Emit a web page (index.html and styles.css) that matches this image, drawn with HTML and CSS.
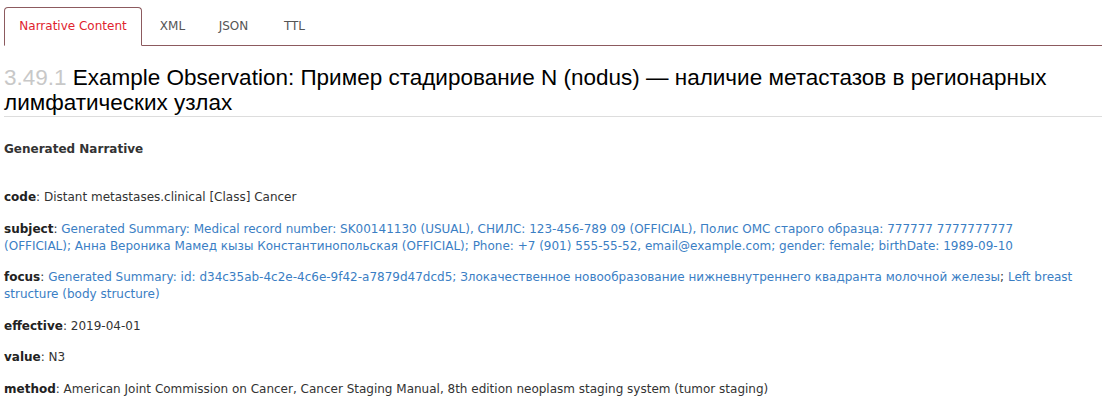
FILE: index.html
```html
<!DOCTYPE html>
<html>
<head>
<meta charset="utf-8">
<link rel="stylesheet" href="styles.css">
</head>
<body>
<ul class="tabs">
  <li class="tab active">Narrative Content</li>
  <li class="tab">XML</li>
  <li class="tab">JSON</li>
  <li class="tab">TTL</li>
</ul>
<h2 class="title"><span class="secnum">3.49.1</span> Example Observation: Пример стадирование N (nodus) — наличие метастазов в регионарных лимфатических узлах</h2>
<div class="narrative">
  <p class="gen"><b>Generated Narrative</b></p>
  <p class="row"><b>code</b>: Distant metastases.clinical [Class] Cancer</p>
  <p class="row"><b>subject</b>: <a>Generated Summary: Medical record number: SK00141130 (USUAL), СНИЛС: 123-456-789 09 (OFFICIAL), Полис ОМС старого образца: 777777 7777777777 (OFFICIAL); Анна Вероника Мамед кызы Константинопольская (OFFICIAL); Phone: +7 (901) 555-55-52, email@example.com; gender: female; birthDate: 1989-09-10</a></p>
  <p class="row"><b>focus</b>: <a>Generated Summary: id: d34c35ab-4c2e-4c6e-9f42-a7879d47dcd5; Злокачественное новообразование нижневнутреннего квадранта молочной железы</a>; <a>Left breast structure (body structure)</a></p>
  <p class="row"><b>effective</b>: 2019-04-01</p>
  <p class="row"><b>value</b>: N3</p>
  <p class="row"><b>method</b>: American Joint Commission on Cancer, Cancer Staging Manual, 8th edition neoplasm staging system (tumor staging)</p>
</div>
</body>
</html>
```
FILE: styles.css
```css
html, body { margin: 0; padding: 0; background: #fff; }
body {
  padding: 7px 4px 0 4px;
  font-family: "DejaVu Sans", Verdana, sans-serif;
  font-size: 12px;
  color: #333;
}
.tabs {
  list-style: none;
  margin: 0;
  padding: 0;
  display: flex;
  border-bottom: 1px solid #8c5a5e;
  height: 38px;
}
.tab {
  width: 61px;
  text-align: center;
  line-height: 38px;
  color: #555;
  font-size: 12px;
}
.tab.active {
  width: 136px;
  color: #e0232e;
  border: 1px solid #8c5a5e;
  border-bottom: 1px solid #fff;
  border-radius: 4px 4px 0 0;
  height: 37px;
  line-height: 37px;
  margin-bottom: -1px;
  background: #fff;
}
.title {
  margin: 19px 0 0 0;
  padding-bottom: 1px;
  font-family: "Liberation Sans", Arial, sans-serif;
  font-weight: normal;
  font-size: 22.5px;
  line-height: 25px;
  color: #000;
  border-bottom: 1px solid #ddd;
}
.secnum { color: #c8c8c8; }
.narrative { max-width: 1073px; }
.narrative p { margin: 0; line-height: 17px; }
.narrative .gen { margin-top: 24px; }
.narrative .gen b { color: #333; }
.narrative .row { margin-top: 31px; }
.narrative .row + .row { margin-top: 14.5px; }
.narrative b { color: #222; }
a { color: #3a7ec4; text-decoration: none; }
```
